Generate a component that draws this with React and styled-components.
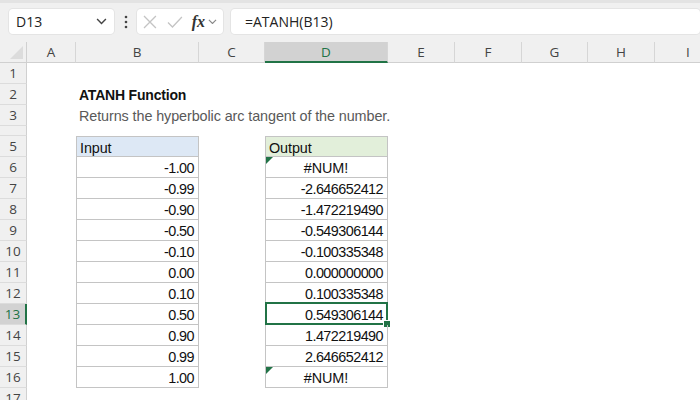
import React from 'react';
import styled, { createGlobalStyle } from 'styled-components';

const Global = createGlobalStyle`
  html, body { margin: 0; padding: 0; background: #fff; }
  body { width: 700px; height: 400px; overflow: hidden; font-family: "Liberation Sans", Arial, sans-serif; }
`;

const CELL_FONT = `"Liberation Sans", Arial, sans-serif`;
const UI_FONT = `"Open Sans", "Noto Sans", "Liberation Sans", sans-serif`;
const GREEN = '#217346';
const COLS = ['A', 'B', 'C', 'D', 'E', 'F', 'G', 'H', 'I'];
const WIDTHS = [49, 123, 66, 123, 67, 67, 66, 67, 67];
const ROW_H = Array.from({ length: 17 }, (_, i) => (i + 1 === 4 ? 10 : 21));

const Bar = styled.div`
  height: 42px;
  background: #f0f0f0;
  border-top: 3px solid #e3e3e3;
  box-sizing: border-box;
  display: flex;
  align-items: flex-start;
  padding: 6px 0 0 9px;
`;

const Box = styled.div`
  height: 25px;
  background: #fff;
  border-radius: 4px;
  box-shadow: 0 0 0 1px #e4e4e4;
  display: flex;
  align-items: center;
  box-sizing: border-box;
  width: ${p => p.w}px;
  flex: ${p => (p.grow ? 1 : 'none')};
  padding: 0 ${p => p.pad || 0}px;
  margin-right: ${p => p.mr || 0}px;
  font-family: ${UI_FONT};
  font-size: 14px;
  color: #222;
`;

const Dots = styled.div`
  width: 23px;
  display: flex;
  justify-content: center;
  align-items: center;
  height: 25px;
`;

const Spacer = styled.div`flex: 1;`;
const Gap = styled.span`width: ${p => p.w}px;`;

const Grid = styled.div`
  display: grid;
  grid-template-columns: 27px ${WIDTHS.map(w => w + 'px').join(' ')};
  grid-template-rows: 21px ${ROW_H.map(h => h + 'px').join(' ')};
  width: 700px;
  overflow: hidden;
`;

const ColHead = styled.div`
  background: ${p => (p.sel ? '#d2d2d2' : '#f0f0f0')};
  color: ${p => (p.sel ? GREEN : '#444')};
  border-right: 1px solid #d6d6d6;
  border-bottom: ${p => (p.sel ? `2px solid ${GREEN}` : '1px solid #d0d0d0')};
  box-sizing: border-box;
  display: flex;
  align-items: center;
  justify-content: center;
  font-family: ${UI_FONT};
  font-size: 13.5px;
`;

const RowHead = styled.div`
  background: ${p => (p.sel ? '#d2d2d2' : '#f0f0f0')};
  color: ${p => (p.sel ? GREEN : '#444')};
  border-right: ${p => (p.sel ? `2px solid ${GREEN}` : '1px solid #d0d0d0')};
  border-bottom: 1px solid #dcdcdc;
  box-sizing: border-box;
  display: flex;
  align-items: center;
  justify-content: center;
  padding-top: 2px;
  font-family: ${UI_FONT};
  font-size: 13.5px;
  overflow: hidden;
  line-height: 1;
`;

const Cell = styled.div`
  position: relative;
  box-sizing: border-box;
  white-space: nowrap;
  overflow: visible;
  font-family: ${CELL_FONT};
  font-size: ${p => (p.bold ? 14 : 14.4)}px;
  letter-spacing: ${p => (p.num ? '-0.55px' : p.bold ? '-0.2px' : '-0.1px')};
  line-height: ${p => p.h + 2}px;
  color: ${p => p.color || '#111'};
  font-weight: ${p => (p.bold ? 700 : 400)};
  text-align: ${p => p.align || 'left'};
  padding: 0 4px 0 3px;
  background: ${p => p.fill || 'transparent'};
  border-left: ${p => (p.boxed ? '1px solid #c4c4c4' : 'none')};
  border-right: ${p => (p.boxed ? '1px solid #c4c4c4' : 'none')};
  border-bottom: ${p => (p.boxed ? '1px solid #c4c4c4' : 'none')};
  border-top: ${p => (p.top ? '1px solid #c4c4c4' : 'none')};
  z-index: ${p => (p.overflowText ? 1 : 0)};
`;

const Selection = styled.div`
  position: absolute;
  left: -1px;
  top: -2px;
  right: -1px;
  bottom: -1px;
  border: 2px solid ${GREEN};
  pointer-events: none;
  &::after {
    content: '';
    position: absolute;
    right: -5px;
    bottom: -5px;
    width: 6px;
    height: 6px;
    background: ${GREEN};
    border: 1px solid #fff;
  }
`;

const ErrFlag = styled.div`
  position: absolute;
  left: 0;
  top: 0;
  width: 0;
  height: 0;
  border-top: 7px solid ${GREEN};
  border-right: 7px solid transparent;
`;

const Corner = styled.div`
  background: #f0f0f0;
  border-right: 1px solid #d0d0d0;
  border-bottom: 1px solid #d0d0d0;
  box-sizing: border-box;
  position: relative;
  &::after {
    content: '';
    position: absolute;
    right: 3px;
    bottom: 3px;
    border-left: 13px solid transparent;
    border-bottom: 13px solid #dcdcdc;
  }
`;

const Fx = styled.span`
  font-family: "Liberation Serif", "DejaVu Serif", serif;
  font-style: italic;
  font-weight: 700;
  font-size: 16px;
  color: #333;
  margin-left: 9px;
  margin-right: 3px;
`;

const inputs = ['-1.00', '-0.99', '-0.90', '-0.50', '-0.10', '0.00', '0.10', '0.50', '0.90', '0.99', '1.00'];
const outputs = ['#NUM!', '-2.646652412', '-1.472219490', '-0.549306144', '-0.100335348', '0.000000000', '0.100335348', '0.549306144', '1.472219490', '2.646652412', '#NUM!'];

function cellFor(row, col) {
  if (row === 2 && col === 'B') return { text: 'ATANH Function', bold: true };
  if (row === 3 && col === 'B') return { text: 'Returns the hyperbolic arc tangent of the number.', color: '#595959' };
  if (row === 5 && col === 'B') return { text: 'Input', boxed: true, top: true, fill: '#dde8f5' };
  if (row === 5 && col === 'D') return { text: 'Output', boxed: true, top: true, fill: '#e2efda' };
  if (row >= 6 && row <= 16 && col === 'B') return { text: inputs[row - 6], boxed: true, align: 'right', num: true };
  if (row >= 6 && row <= 16 && col === 'D') {
    const v = outputs[row - 6];
    const err = v.startsWith('#');
    return { text: v, boxed: true, align: err ? 'center' : 'right', err, num: !err, sel: row === 13 };
  }
  return null;
}

function XIcon() {
  return (
    <svg width="14" height="14" viewBox="0 0 14 14"><path d="M1 1L13 13M13 1L1 13" stroke="#c4c4c4" strokeWidth="1.3" fill="none" /></svg>
  );
}

function CheckIcon() {
  return (
    <svg width="16" height="12" viewBox="0 0 16 12"><path d="M1 6.5L5.5 11L15 1" stroke="#c4c4c4" strokeWidth="1.3" fill="none" /></svg>
  );
}

function Chevron({ size = 10, color = '#555' }) {
  return (
    <svg width={size} height={size * 0.6} viewBox="0 0 10 6"><path d="M1 1L5 5L9 1" stroke={color} strokeWidth="1.3" fill="none" /></svg>
  );
}

export default function App() {
  return (
    <>
      <Global />
      <Bar>
        <Box w={105} pad={7}>
          <span>D13</span>
          <Spacer />
          <Chevron size={11} color="#444" />
        </Box>
        <Dots>
          <svg width="4" height="14" viewBox="0 0 4 14">
            <circle cx="2" cy="2" r="1.3" fill="#444" />
            <circle cx="2" cy="7" r="1.3" fill="#444" />
            <circle cx="2" cy="12" r="1.3" fill="#444" />
          </svg>
        </Dots>
        <Box w={86} pad={6} mr={8}>
          <XIcon />
          <Gap w={10} />
          <CheckIcon />
          <Fx>fx</Fx>
          <Chevron size={9} color="#888" />
        </Box>
        <Box grow pad={14}>
          <span>=ATANH(B13)</span>
        </Box>
      </Bar>
      <Grid>
        <Corner />
        {COLS.map(c => (
          <ColHead key={c} sel={c === 'D'}>{c}</ColHead>
        ))}
        {ROW_H.map((h, i) => {
          const r = i + 1;
          return (
            <React.Fragment key={r}>
              <RowHead sel={r === 13}>{r === 4 ? '' : r}</RowHead>
              {COLS.map(c => {
                const d = cellFor(r, c);
                if (!d) return <Cell key={c} h={h} />;
                return (
                  <Cell
                    key={c}
                    h={h}
                    bold={d.bold}
                    num={d.num}
                    color={d.color}
                    align={d.align}
                    boxed={d.boxed}
                    top={d.top}
                    fill={d.fill}
                    overflowText={!d.boxed}
                  >
                    {d.err && <ErrFlag />}
                    {d.text}
                    {d.sel && <Selection />}
                  </Cell>
                );
              })}
            </React.Fragment>
          );
        })}
      </Grid>
    </>
  );
}
